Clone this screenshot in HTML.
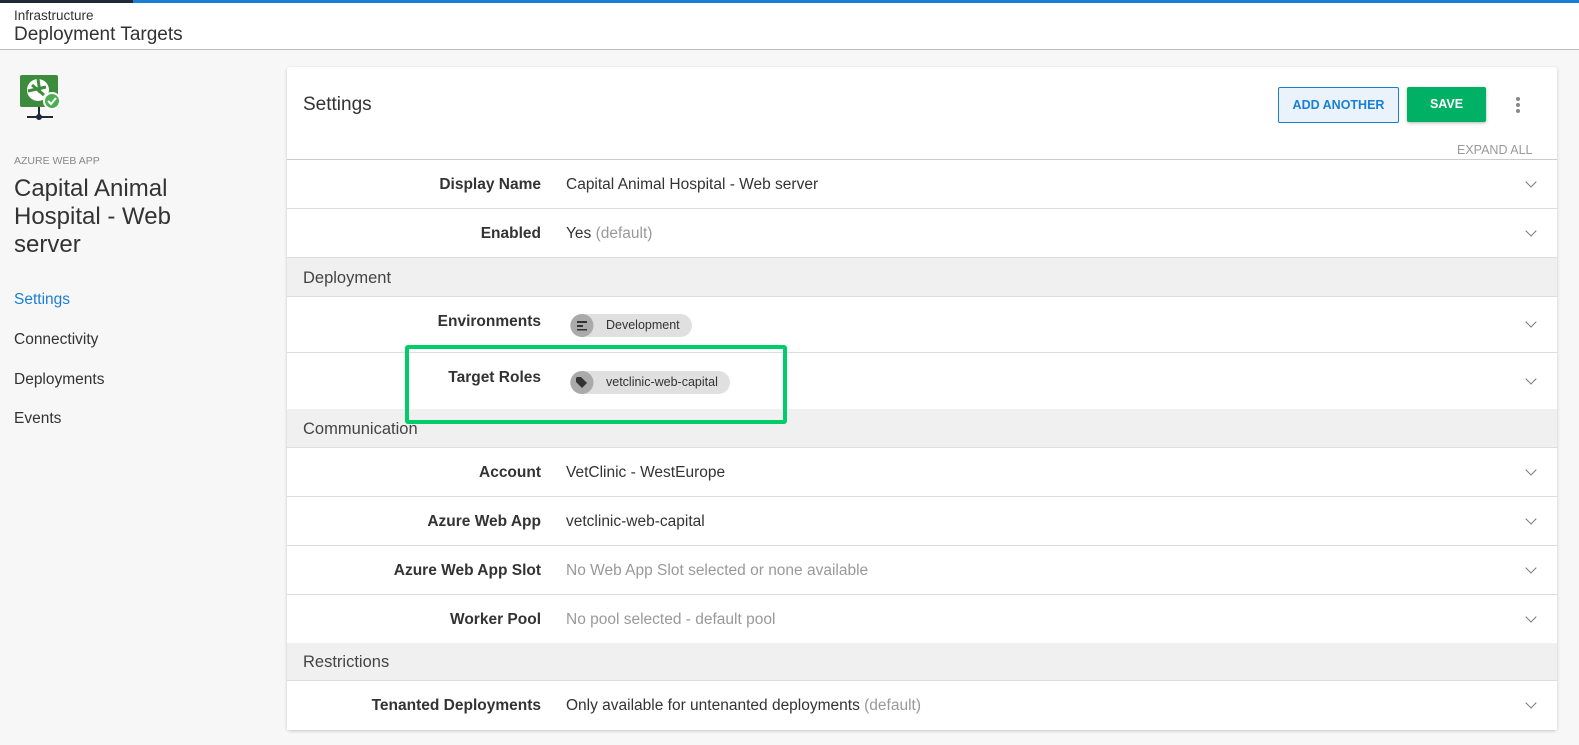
<!DOCTYPE html><html><head><style>
body{margin:0;width:1579px;height:745px;background:#f7f7f7;font-family:"Liberation Sans",sans-serif;position:relative;overflow:hidden;color:#333}
.a{position:absolute}
.row{position:absolute;left:0;right:0;border-bottom:1px solid #ddd;background:#fff}
.lab{position:absolute;right:1016px;font-weight:bold;font-size:15.5px;color:#333}
.val{position:absolute;left:279px;font-size:15.5px;color:#333}
.sec{position:absolute;left:0;right:0;background:#f0f0f0;border-bottom:1px solid #ddd;font-size:16.5px;color:#444;padding-left:16px;box-sizing:border-box}
.chev{position:absolute;right:22px;width:7px;height:7px;border-right:1.5px solid #777;border-bottom:1.5px solid #777;transform:rotate(45deg)}
.grey{color:#999}
.chip{position:absolute;left:283px;height:23px;background:#e0e0e0;border-radius:12px;font-size:12.5px;line-height:23px;padding:0 12px 0 36px;color:#333}
.chip svg{position:absolute;left:0;top:0}
</style></head><body>
<div class="a" style="left:0;top:0;width:1579px;height:3px;background:#1a7fd4"></div>
<div class="a" style="left:0;top:0;width:133px;height:3px;background:#1e2a38"></div>
<div class="a" style="left:0;top:3px;width:1579px;height:46px;background:#fff;border-bottom:1px solid #bbb"></div>
<div class="a" style="left:14px;top:8px;font-size:13.5px;color:#333">Infrastructure</div>
<div class="a" style="left:14px;top:24px;font-size:19px;color:#333">Deployment Targets</div>
<svg class="a" style="left:18px;top:73px" width="45" height="48" viewBox="0 0 45 48"><rect x="2" y="2" width="38" height="32" rx="2" fill="#3d8b3d"/><circle cx="20" cy="17" r="11" fill="#fff"/><path d="M14 12 L26 22 M20 6 L22 20 M10 18 L28 14" stroke="#3d8b3d" stroke-width="3"/><line x1="21" y1="34" x2="21" y2="44" stroke="#1e2a38" stroke-width="2"/><line x1="9" y1="44" x2="35" y2="44" stroke="#1e2a38" stroke-width="2"/><circle cx="21" cy="44" r="3" fill="#1e2a38"/><circle cx="34" cy="28" r="8" fill="#4caf50" stroke="#fff" stroke-width="2"/><path d="M30 28 L33 31 L38 25" stroke="#fff" stroke-width="2" fill="none"/></svg>
<div class="a" style="left:14px;top:155px;font-size:10.5px;color:#888">AZURE WEB APP</div>
<div class="a" style="left:14px;top:175px;font-size:24px;line-height:28px;color:#333;width:220px">Capital Animal Hospital - Web server</div>
<div class="a" style="left:14px;top:291px;font-size:15.5px;color:#1a7fd4">Settings</div>
<div class="a" style="left:14px;top:331px;font-size:15.5px">Connectivity</div>
<div class="a" style="left:14px;top:371px;font-size:15.5px">Deployments</div>
<div class="a" style="left:14px;top:410px;font-size:15.5px">Events</div>
<div class="a" style="left:287px;top:67px;width:1270px;height:663px;background:#fff;box-shadow:0 1px 3px rgba(0,0,0,.2);border-radius:3px">
<div class="a" style="left:16px;top:27px;font-size:19px;color:#333">Settings</div>
<div class="a" style="left:991px;top:20px;width:119px;height:34px;border:1px solid #1a7fd4;background:#eaf3fc;border-radius:2px;color:#1a7fd4;font-size:12.5px;font-weight:bold;text-align:center;line-height:34px">ADD ANOTHER</div>
<div class="a" style="left:1120px;top:20px;width:79px;height:35px;background:#00b065;border-radius:2px;color:#fff;font-size:12.5px;font-weight:bold;text-align:center;line-height:35px;box-shadow:0 1px 3px rgba(0,0,0,.3)">SAVE</div>
<div class="a" style="left:1229px;top:30px;width:4px;height:4px;background:#888;border-radius:2px;box-shadow:0 6px 0 #888,0 12px 0 #888"></div>
<div class="a" style="left:1170px;top:76px;font-size:12.5px;color:#999">EXPAND ALL</div>
<div class="a" style="left:0;right:0;top:92px;border-top:1px solid #ccc"></div>
<div class="row" style="top:93px;height:48px"><div class="lab" style="top:16px">Display Name</div><div class="val" style="top:16px">Capital Animal Hospital - Web server</div><div class="chev" style="top:18px"></div></div>
<div class="row" style="top:142px;height:48px"><div class="lab" style="top:16px">Enabled</div><div class="val" style="top:16px">Yes <span class="grey">(default)</span></div><div class="chev" style="top:18px"></div></div>
<div class="sec" style="top:191px;height:39px;line-height:40px">Deployment</div>
<div class="row" style="top:230px;height:55px"><div class="lab" style="top:16px">Environments</div><div class="chip" style="top:17px">Development<svg width="24" height="23"><circle cx="12" cy="11.5" r="11.5" fill="#aaa"/><path d="M7 7h10v2H7zM7 11h6v2H7zM7 15h10v1.5H7z" fill="#333"/></svg></div><div class="chev" style="top:21px"></div></div>
<div class="row" style="top:286px;height:56px"><div class="lab" style="top:16px">Target Roles</div><div class="chip" style="top:18px">vetclinic-web-capital<svg width="24" height="23"><circle cx="12" cy="11.5" r="11.5" fill="#aaa"/><path d="M6 7v4l6 6 5-5-6-6H7z" fill="#333"/></svg></div><div class="chev" style="top:22px"></div></div>
<div class="sec" style="top:342px;height:39px;line-height:40px">Communication</div>
<div class="row" style="top:381px;height:48px"><div class="lab" style="top:16px">Account</div><div class="val" style="top:16px">VetClinic - WestEurope</div><div class="chev" style="top:18px"></div></div>
<div class="row" style="top:430px;height:48px"><div class="lab" style="top:16px">Azure Web App</div><div class="val" style="top:16px">vetclinic-web-capital</div><div class="chev" style="top:18px"></div></div>
<div class="row" style="top:479px;height:48px"><div class="lab" style="top:16px">Azure Web App Slot</div><div class="val grey" style="top:16px">No Web App Slot selected or none available</div><div class="chev" style="top:18px"></div></div>
<div class="row" style="top:528px;height:48px"><div class="lab" style="top:16px">Worker Pool</div><div class="val grey" style="top:16px">No pool selected - default pool</div><div class="chev" style="top:18px"></div></div>
<div class="sec" style="top:576px;height:38px;line-height:39px">Restrictions</div>
<div class="row" style="top:614px;height:49px;border:none"><div class="lab" style="top:16px">Tenanted Deployments</div><div class="val" style="top:16px">Only available for untenanted deployments <span class="grey">(default)</span></div><div class="chev" style="top:18px"></div></div>
</div>
<div class="a" style="left:405px;top:345px;width:374px;height:71px;border:4px solid #00cc6a;border-radius:3px"></div>
</body></html>
